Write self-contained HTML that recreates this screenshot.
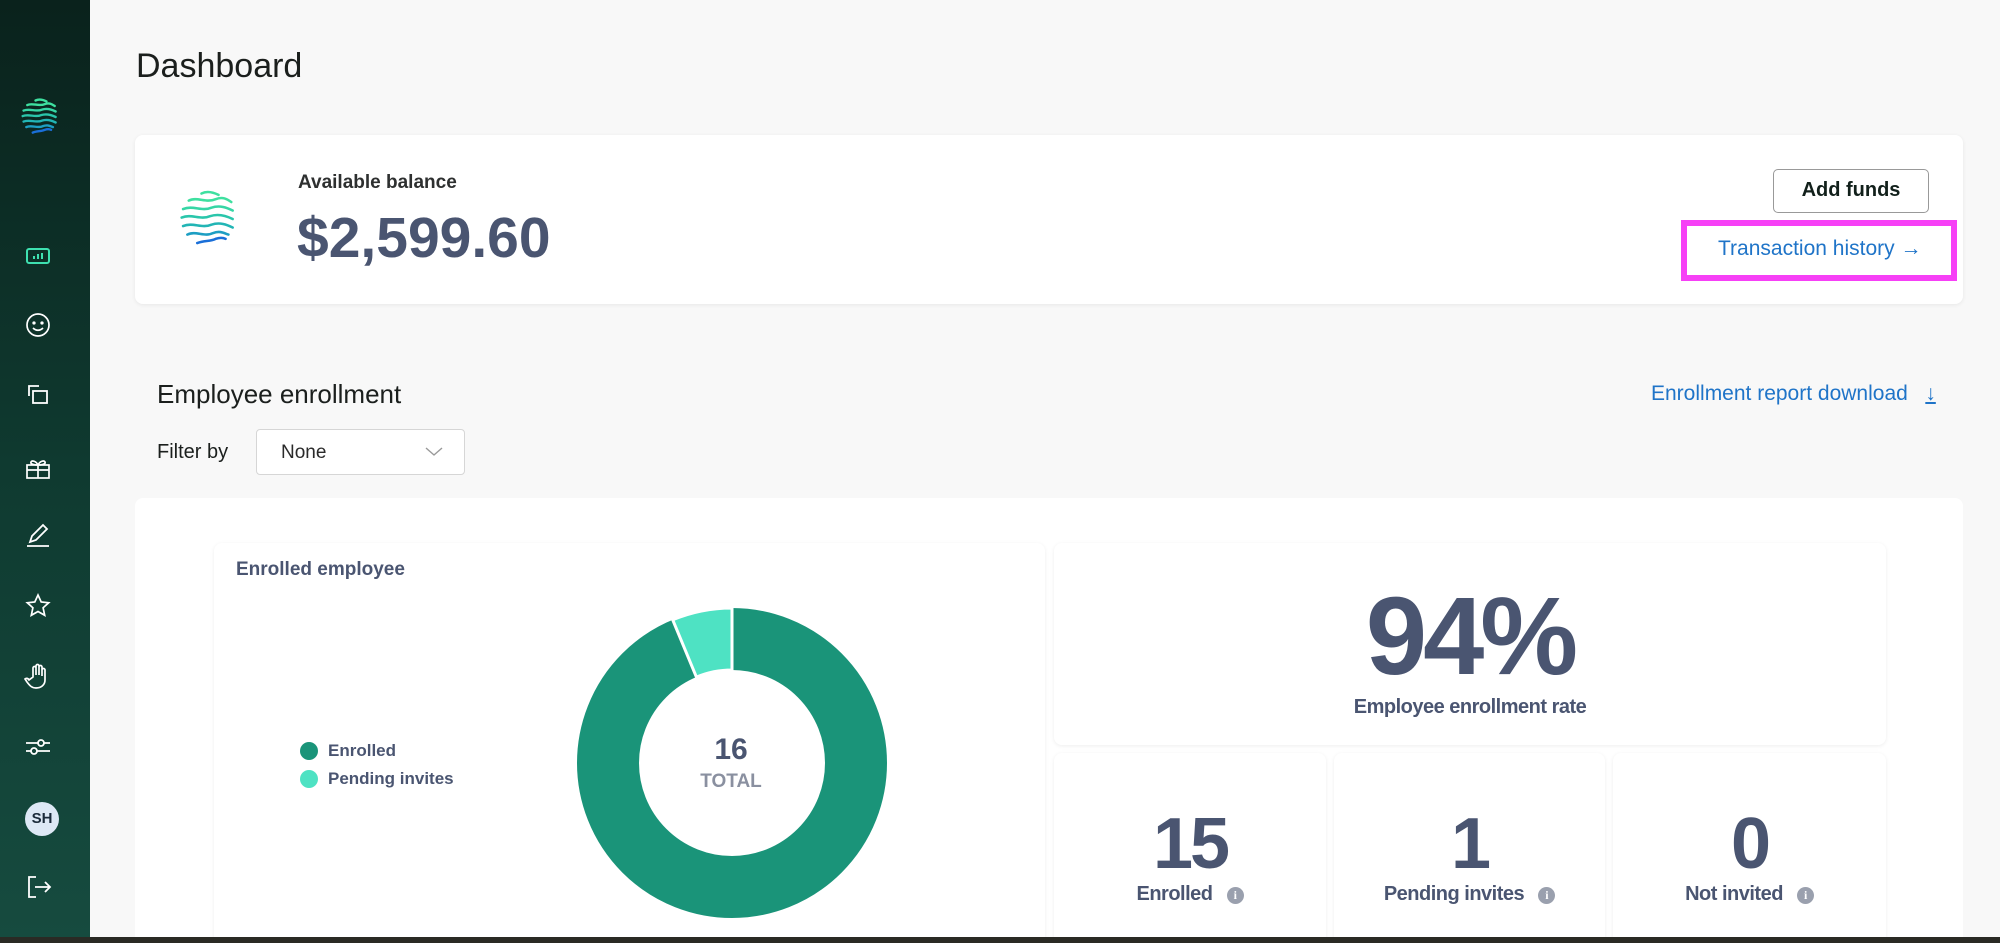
<!DOCTYPE html>
<html style="overflow:hidden;width:2000px;height:943px"><head><meta charset="utf-8"><style>
*{box-sizing:border-box;margin:0;padding:0}
body{width:2000px;height:943px;overflow:hidden;background:#2a2a24;font-family:"Liberation Sans",sans-serif;position:relative}
.abs{position:absolute}
.wrap{position:absolute;left:0;top:0;width:2000px;height:937px;overflow:hidden;background:#f8f8f8}
.side{left:0;top:0;width:90px;height:937px;background:linear-gradient(180deg,#0a221c 0%,#0f3a30 50%,#164b3f 100%)}
.ic{position:absolute;left:24px;width:28px;height:28px}
.card{position:absolute;background:#fff;border-radius:8px;box-shadow:0 1px 4px rgba(0,0,0,.07)}
.navy{color:#4a5571}
.blue{color:#1f74c8}
.num{font-weight:bold;color:#4a5571;text-align:center;position:absolute;left:0;right:0;letter-spacing:-3px}
.lbl{font-weight:bold;color:#4a5571;text-align:center;position:absolute;left:0;right:0;font-size:20px;letter-spacing:-.5px}
.info{display:inline-block;width:17px;height:17px;border-radius:50%;background:#9aa0ae;color:#fff;font-size:12px;line-height:17px;text-align:center;vertical-align:1px;margin-left:14px;font-family:"Liberation Serif",serif;font-weight:bold}
</style></head><body>
<div class="wrap">
<div class="abs side">
 <svg class="abs" style="left:19px;top:95px" width="44" height="44" viewBox="0 0 48 48" fill="none" stroke-width="2.6" stroke-linecap="round">
  <path d="M18 6c4-2 8-1 12 1" stroke="#3ee0a0"/><path d="M9 11c6-3 12 2 19-1 5-2 8 0 11 2" stroke="#3ee0a0"/>
  <path d="M5 17c7-3 13 2 20-1 6-2 11 0 15 2" stroke="#36d6a5"/><path d="M4 23c7-3 13 2 20-1 6-2 12 0 16 2" stroke="#2ac6ab"/>
  <path d="M5 29c7-3 13 2 20-1 6-2 11 0 15 2" stroke="#22b5b5"/><path d="M8 35c6-3 12 2 18-1 5-2 8 0 11 1" stroke="#1d9ec3"/>
  <path d="M15 41c5-2 9-1 13-3 3-1 5-1 7 0" stroke="#1a6fd8"/>
 </svg>
 <svg class="ic" style="top:242px" viewBox="0 0 28 28" fill="none" stroke="#3ee0b0" stroke-width="2"><rect x="3" y="7" width="22" height="14" rx="2"/><path d="M10 17v-3M14 17v-5M18 17v-6"/></svg>
 <svg class="ic" style="top:311px" viewBox="0 0 28 28" fill="none" stroke="#fff" stroke-width="1.7"><circle cx="14" cy="14" r="11"/><circle cx="10" cy="12" r=".8" fill="#fff"/><circle cx="18" cy="12" r=".8" fill="#fff"/><path d="M9 17c3 3 7 3 10 0"/></svg>
 <svg class="ic" style="top:381px" viewBox="0 0 28 28" fill="none" stroke="#fff" stroke-width="1.8"><path d="M5 15V5h10"/><rect x="9" y="10" width="14" height="12"/></svg>
 <svg class="ic" style="top:455px" viewBox="0 0 28 28" fill="none" stroke="#fff" stroke-width="1.7"><rect x="3" y="10" width="22" height="13"/><path d="M14 10v13M3 15h22M14 10c-2-4-6-5-7-3s3 3 7 3c2-4 6-5 7-3s-3 3-7 3"/></svg>
 <svg class="ic" style="top:522px" viewBox="0 0 28 28" fill="none" stroke="#fff" stroke-width="1.8"><path d="M3 24h22M6 20l2-6L19 3l4 4-11 11z"/></svg>
 <svg class="ic" style="top:592px" viewBox="0 0 28 28" fill="none" stroke="#fff" stroke-width="1.7"><path d="M14 3l3.2 7 7.5.8-5.6 5 1.6 7.5L14 19.5l-6.7 3.8 1.6-7.5-5.6-5 7.5-.8z"/></svg>
 <svg class="ic" style="top:662px" viewBox="0 0 28 28" fill="none" stroke="#fff" stroke-width="1.7"><path d="M9 15V6a1.5 1.5 0 013 0v7-9a1.5 1.5 0 013 0v9-8a1.5 1.5 0 013 0v9-6a1.5 1.5 0 013 0v10c0 5-4 8-9 8-4 0-6-2-9-6l-2-3c1-1 3-1 4 1z"/></svg>
 <svg class="ic" style="top:733px" viewBox="0 0 28 28" fill="none" stroke="#fff" stroke-width="1.8"><path d="M2 10h12M20 10h6M2 18h5M13 18h13"/><circle cx="17" cy="10" r="3"/><circle cx="10" cy="18" r="3"/></svg>
 <div class="abs" style="left:25px;top:802px;width:34px;height:34px;border-radius:50%;background:#dde8f5;color:#1b2a3a;font-size:15px;font-weight:bold;text-align:center;line-height:34px">SH</div>
 <svg class="ic" style="top:873px" viewBox="0 0 28 28" fill="none" stroke="#fff" stroke-width="1.8"><path d="M12 4H5v20h7M11 14h15M21 9l5 5-5 5"/></svg>
</div>
<div class="abs" style="left:136px;top:47px;font-size:34px;color:#1b1f1d">Dashboard</div>

<div class="card" style="left:135px;top:135px;width:1828px;height:169px">
 <svg class="abs" style="left:41px;top:50px" width="68" height="68" viewBox="0 0 48 48" fill="none" stroke-width="1.8" stroke-linecap="round">
  <path d="M18 6c4-2 8-1 12 1" stroke="#3ee0a0"/><path d="M9 11c6-3 12 2 19-1 5-2 8 0 11 2" stroke="#3ee0a0"/>
  <path d="M5 17c7-3 13 2 20-1 6-2 11 0 15 2" stroke="#36d6a5"/><path d="M4 23c7-3 13 2 20-1 6-2 12 0 16 2" stroke="#2ac6ab"/>
  <path d="M5 29c7-3 13 2 20-1 6-2 11 0 15 2" stroke="#22b5b5"/><path d="M8 35c6-3 12 2 18-1 5-2 8 0 11 1" stroke="#1d9ec3"/>
  <path d="M15 41c5-2 9-1 13-3 3-1 5-1 7 0" stroke="#1a6fd8"/>
 </svg>
 <div class="abs" style="left:163px;top:37px;font-size:19px;font-weight:bold;color:#2e3030">Available balance</div>
 <div class="abs navy" style="left:162px;top:70px;font-size:57px;font-weight:bold">$2,599.60</div>
 <div class="abs" style="left:1638px;top:34px;width:156px;height:44px;border:1.5px solid #999;border-radius:5px;text-align:center;line-height:41px;font-size:20px;font-weight:bold;color:#12201b">Add funds</div>
 <div class="abs" style="left:1546px;top:85px;width:276px;height:61px;border:6px solid #f640f6"></div>
 <div class="abs blue" style="left:1583px;top:102px;font-size:21px">Transaction history →</div>
</div>

<div class="abs" style="left:157px;top:379px;font-size:26px;color:#1b1f1d">Employee enrollment</div>
<div class="abs blue" style="left:1651px;top:382px;font-size:21px">Enrollment report download&nbsp;&nbsp;&nbsp;<span style="display:inline-block;text-decoration:underline">↓</span></div>
<div class="abs" style="left:157px;top:441px;font-size:20px;color:#1b1f1d">Filter by</div>
<div class="abs" style="left:256px;top:429px;width:209px;height:46px;background:#fff;border:1.5px solid #d6d6d6;border-radius:4px">
 <span class="abs" style="left:24px;top:12px;font-size:19px;color:#2a2a2a">None</span>
 <svg class="abs" style="left:168px;top:16px" width="18" height="12" viewBox="0 0 18 12" fill="none" stroke="#999" stroke-width="1.4"><path d="M1 2l8 7 8-7"/></svg>
</div>

<div class="abs" style="left:135px;top:498px;width:1828px;height:460px;background:#fff;border-radius:8px"></div>
<div class="card" style="left:214px;top:543px;width:831px;height:420px">
 <div class="abs" style="left:22px;top:16px;font-size:19px;font-weight:bold;color:#4a5571">Enrolled employee</div>
 <div class="abs" style="left:86px;top:199px;width:18px;height:18px;border-radius:50%;background:#1a9479"></div>
 <div class="abs" style="left:114px;top:198px;font-size:17px;font-weight:bold;color:#4a5571">Enrolled</div>
 <div class="abs" style="left:86px;top:227px;width:18px;height:18px;border-radius:50%;background:#4ee2c3"></div>
 <div class="abs" style="left:114px;top:226px;font-size:17px;font-weight:bold;color:#4a5571">Pending invites</div>
 <svg class="abs" style="left:362px;top:64px" width="312" height="312" viewBox="-156 -156 312 312">
  <circle r="124" fill="none" stroke="#1a9479" stroke-width="62"/>
  <path d="M0 -155 L0 -93 A93 93 0 0 0 -35.6 -85.9 L-59.3 -143.2 A155 155 0 0 1 0 -155Z" fill="#4ee2c3" stroke="#fff" stroke-width="3"/>
  <line x1="0" y1="-156" x2="0" y2="-92" stroke="#fff" stroke-width="3"/>
 </svg>
 <div class="abs" style="left:467px;top:190px;width:100px;text-align:center;font-size:30px;font-weight:bold;color:#4a5571">16</div>
 <div class="abs" style="left:467px;top:228px;width:100px;text-align:center;font-size:19px;font-weight:bold;color:#8a90a0">TOTAL</div>
</div>
<div class="card" style="left:1054px;top:543px;width:832px;height:202px">
 <div class="num" style="top:30px;font-size:110px;letter-spacing:-4px">94%</div>
 <div class="lbl" style="top:153px">Employee enrollment rate</div>
</div>
<div class="card" style="left:1054px;top:753px;width:272px;height:210px">
 <div class="num" style="top:50px;font-size:72px">15</div><div class="lbl" style="top:130px">Enrolled<span class="info">i</span></div></div>
<div class="card" style="left:1334px;top:753px;width:271px;height:210px">
 <div class="num" style="top:50px;font-size:72px">1</div><div class="lbl" style="top:130px">Pending invites<span class="info">i</span></div></div>
<div class="card" style="left:1613px;top:753px;width:273px;height:210px">
 <div class="num" style="top:50px;font-size:72px">0</div><div class="lbl" style="top:130px">Not invited<span class="info">i</span></div></div>
</div>
</body></html>
